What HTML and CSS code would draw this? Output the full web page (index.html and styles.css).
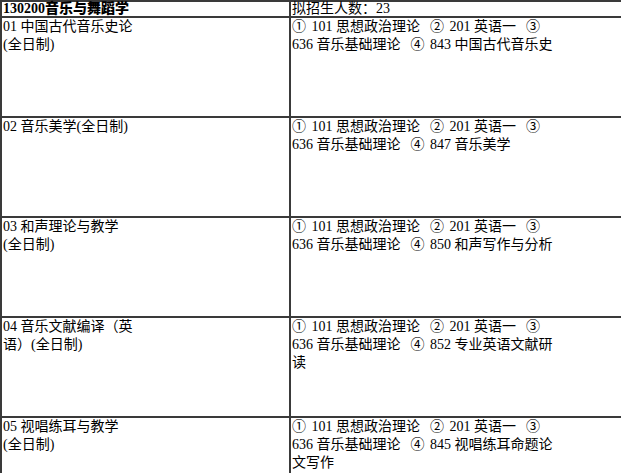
FILE: index.html
```html
<!DOCTYPE html>
<html lang="zh-CN">
<head>
<meta charset="utf-8">
<title>130200音乐与舞蹈学</title>
<link rel="stylesheet" href="styles.css">
</head>
<body>
<table class="plan">
  <tr class="head">
    <td class="c1"><b>130200音乐与舞蹈学</b></td>
    <td class="c2">拟招生人数：23</td>
  </tr>
  <tr class="row">
    <td class="c1">01 中国古代音乐史论<br>(全日制)</td>
    <td class="c2"><span class="n">①</span> 101 思想政治理论<span class="g"></span><span class="n">②</span> 201 英语一<span class="g"></span><span class="n">③</span><br>636 音乐基础理论<span class="g"></span><span class="n">④</span> 843 中国古代音乐史</td>
  </tr>
  <tr class="row">
    <td class="c1">02 音乐美学(全日制)</td>
    <td class="c2"><span class="n">①</span> 101 思想政治理论<span class="g"></span><span class="n">②</span> 201 英语一<span class="g"></span><span class="n">③</span><br>636 音乐基础理论<span class="g"></span><span class="n">④</span> 847 音乐美学</td>
  </tr>
  <tr class="row">
    <td class="c1">03 和声理论与教学<br>(全日制)</td>
    <td class="c2"><span class="n">①</span> 101 思想政治理论<span class="g"></span><span class="n">②</span> 201 英语一<span class="g"></span><span class="n">③</span><br>636 音乐基础理论<span class="g"></span><span class="n">④</span> 850 和声写作与分析</td>
  </tr>
  <tr class="row">
    <td class="c1">04 音乐文献编译（英<br>语）(全日制)</td>
    <td class="c2"><span class="n">①</span> 101 思想政治理论<span class="g"></span><span class="n">②</span> 201 英语一<span class="g"></span><span class="n">③</span><br>636 音乐基础理论<span class="g"></span><span class="n">④</span> 852 专业英语文献研<br>读</td>
  </tr>
  <tr class="row">
    <td class="c1">05 视唱练耳与教学<br>(全日制)</td>
    <td class="c2"><span class="n">①</span> 101 思想政治理论<span class="g"></span><span class="n">②</span> 201 英语一<span class="g"></span><span class="n">③</span><br>636 音乐基础理论<span class="g"></span><span class="n">④</span> 845 视唱练耳命题论<br>文写作</td>
  </tr>
</table>
</body>
</html>
```

FILE: styles.css
```css
html, body {
  margin: 0;
  padding: 0;
  background: #ffffff;
}
body {
  font-family: "Liberation Serif", "Noto Sans CJK SC", serif;
  font-size: 14px;
  line-height: 18px;
  color: #000000;
  overflow: hidden;
}
.plan {
  border-collapse: collapse;
  width: 720px;
  table-layout: fixed;
  border-left: 2px solid #7a7a7a;
  border-top: 2px solid #555555;
}
.plan td {
  border: 2px solid #3a3a3a;
  vertical-align: top;
  padding: 0 0 0 1px;
  white-space: nowrap;
}
.plan .c1 {
  width: 286px;
}
.head td {
  height: 14px;
  line-height: 14px;
  padding-top: 0;
}
.head b {
  font-weight: 900;
}
.row td {
  height: 98px;
}
.g {
  display: inline-block;
  width: 10px;
}
.n {
  display: inline-block;
  width: 16px;
  text-align: left;
}
```
